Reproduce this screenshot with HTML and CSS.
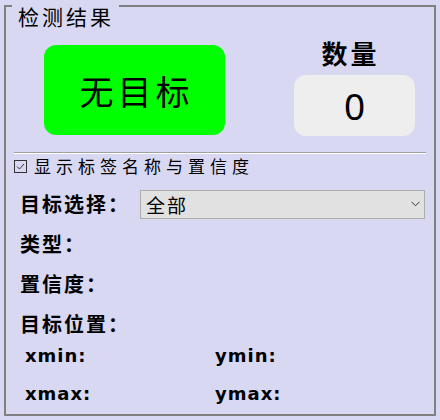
FILE: index.html
```html
<!DOCTYPE html>
<html lang="zh-CN">
<head>
<meta charset="utf-8">
<title>检测结果</title>
<link rel="stylesheet" href="styles.css">
</head>
<body>
<div class="panel">
  <div class="legend">检测结果</div>
  <div class="top">
    <div class="status">无目标</div>
    <div class="count">
      <div class="count-label">数量</div>
      <div class="count-box">0</div>
    </div>
  </div>
  <div class="sep"></div>
  <label class="check-row">
    <svg class="checkbox" width="13" height="13" viewBox="0 0 13 13">
      <rect x="0.5" y="0.5" width="12" height="12" fill="none" stroke="#333333"/>
      <path d="M3 6.5 L5.5 9 L10 4" fill="none" stroke="#333333" stroke-width="1"/>
    </svg>
    <span class="check-text">显示标签名称与置信度</span>
  </label>
  <div class="form">
    <div class="row">
      <span class="lbl">目标选择：</span>
      <div class="combo">
        <span class="combo-text">全部</span>
        <svg class="chev" width="9" height="6" viewBox="0 0 9 6">
          <path d="M0.5 0.8 L4.5 4.8 L8.5 0.8" fill="none" stroke="#333333" stroke-width="1"/>
        </svg>
      </div>
    </div>
    <div class="row"><span class="lbl">类型：</span></div>
    <div class="row"><span class="lbl">置信度：</span></div>
    <div class="row"><span class="lbl">目标位置：</span></div>
  </div>
  <div class="coords">
    <span>xmin:</span><span>ymin:</span>
    <span>xmax:</span><span>ymax:</span>
  </div>
</div>
</body>
</html>
```
FILE: styles.css
```css
html, body {
  margin: 0;
  padding: 0;
  background: #d8d8f3;
}
body {
  width: 440px;
  height: 420px;
  overflow: hidden;
  font-family: "Noto Sans CJK SC", "Noto Sans", sans-serif;
  color: #000;
}
.panel {
  position: relative;
  margin: 5px 4px 4px 4px;
  height: 411px;
  box-sizing: border-box;
  border: 2px solid #808080;
}
.panel::before {
  content: "";
  display: table;
}
.legend {
  position: absolute;
  top: -2px;
  left: 6px;
  padding: 0 5px 0 6px;
  background: #d8d8f3;
  font-size: 21px;
  line-height: 22px;
  letter-spacing: 3px;
}
.top {
  display: flex;
  align-items: flex-start;
  padding-left: 38px;
}
.status {
  margin-top: 38px;
  width: 181px;
  height: 90px;
  background: #00ff00;
  border-radius: 12px;
  display: flex;
  align-items: center;
  justify-content: center;
  font-size: 34px;
  letter-spacing: 4px;
  padding-left: 4px;
  box-sizing: border-box;
}
.count {
  margin-top: 29px;
  margin-left: 69px;
  width: 121px;
  display: flex;
  flex-direction: column;
  align-items: center;
}
.count-label {
  font-size: 26px;
  font-weight: bold;
  line-height: 34px;
  letter-spacing: 3px;
  margin-right: 8px;
}
.count-box {
  margin-top: 5px;
  width: 121px;
  height: 61px;
  background: #eeeeee;
  border-radius: 12px;
  display: flex;
  align-items: center;
  justify-content: center;
  font-family: "Noto Sans", sans-serif;
  font-size: 37px;
}
.sep {
  margin: 16px 8px 0 8px;
  border-top: 1px solid #a0a0a0;
  border-bottom: 1px solid #ffffff;
}
.check-row {
  display: flex;
  align-items: center;
  height: 22px;
  margin-top: 1px;
  padding-left: 8px;
}
.checkbox {
  flex: none;
  margin-right: 7px;
}
.check-text {
  font-size: 17px;
  letter-spacing: 5px;
  line-height: 22px;
}
.form {
  display: flex;
  flex-direction: column;
  gap: 10px;
  margin-top: 12px;
  padding-left: 14px;
  padding-right: 9px;
}
.row {
  height: 30px;
  display: flex;
  align-items: center;
}
.lbl {
  flex: none;
  width: 120px;
  font-size: 20px;
  font-weight: bold;
  letter-spacing: 2px;
  line-height: 30px;
}
.combo {
  flex: 1;
  height: 29px;
  box-sizing: border-box;
  background: #e1e1e1;
  border: 1px solid #adadad;
  display: flex;
  align-items: center;
  justify-content: space-between;
  padding: 0 4px 0 5px;
}
.combo-text {
  font-size: 19px;
  letter-spacing: 2px;
  line-height: 27px;
}
.chev {
  flex: none;
}
.coords {
  display: grid;
  grid-template-columns: 190px auto;
  grid-auto-rows: 30px;
  row-gap: 8px;
  margin-top: 2px;
  padding-left: 19px;
  font-family: "DejaVu Sans", sans-serif;
  font-weight: bold;
  font-size: 18px;
  letter-spacing: 1px;
  line-height: 30px;
}
```
